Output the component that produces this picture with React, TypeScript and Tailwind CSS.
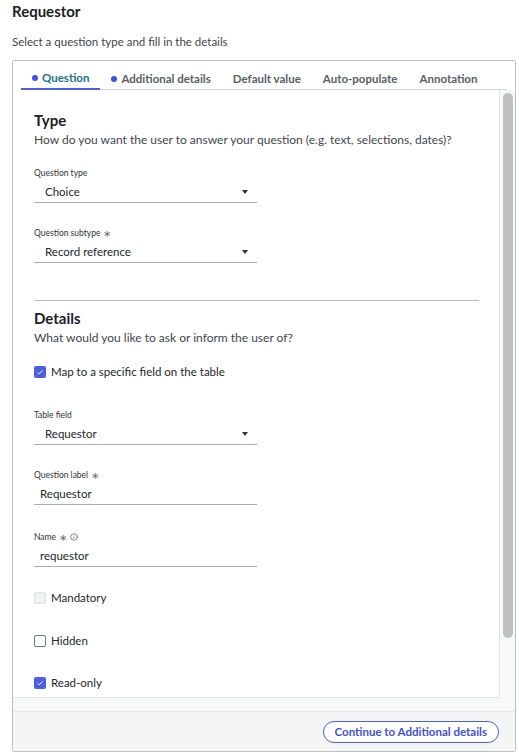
import { Info } from "lucide-react";

const font = { fontFamily: 'Lato, "Noto Sans", Arial, sans-serif' };

const Caret = () => (
  <svg width="6" height="4" viewBox="0 0 6 4" className="text-[#2e3438]">
    <path d="M0 0h6L3 4z" fill="currentColor" />
  </svg>
);

const Req = () => <span className="ml-[3px] text-[10px] text-[#6b7378]">∗</span>;

const Label = ({ children, className = "" }: { children: React.ReactNode; className?: string }) => (
  <div className={`flex h-[12px] items-center text-[8.5px] leading-[12px] text-[#2e3438] ${className}`}>
    {children}
  </div>
);

const SelectRow = ({ value }: { value: string }) => (
  <div className="mt-[2px] flex h-[22px] w-[223px] items-center justify-between border-b border-[#a9aeb1] pl-[11px] pr-[9px] text-[11.5px] text-[#22272b]">
    <span>{value}</span>
    <Caret />
  </div>
);

const InputRow = ({ value }: { value: string }) => (
  <div className="mt-[2px] flex h-[22px] w-[223px] items-center border-b border-[#a9aeb1] pl-[6px] text-[11.5px] text-[#22272b]">
    {value}
  </div>
);

const Check = ({ state }: { state: "on" | "off" | "disabled" }) => {
  if (state === "on")
    return (
      <span className="flex h-[12px] w-[12px] items-center justify-center rounded-[2px] bg-[#4b5ee4]">
        <svg width="8" height="8" viewBox="0 0 8 8">
          <path d="M1.5 4.2l1.7 1.6L6.6 2.4" stroke="white" strokeWidth="1" fill="none" />
        </svg>
      </span>
    );
  if (state === "disabled")
    return <span className="h-[12px] w-[12px] rounded-[2px] border border-[#dfe1e2] bg-[#eff0f0]" />;
  return <span className="h-[12px] w-[12px] rounded-[2px] border border-[#737a7f] bg-white" />;
};

const CheckRow = ({ label, state, className = "" }: { label: string; state: "on" | "off" | "disabled"; className?: string }) => (
  <div className={`flex h-[16px] items-center gap-[5px] text-[11.5px] text-[#22272b] ${className}`}>
    <Check state={state} />
    <span>{label}</span>
  </div>
);

const tabs = [
  { name: "Question", dot: true, active: true },
  { name: "Additional details", dot: true },
  { name: "Default value" },
  { name: "Auto-populate" },
  { name: "Annotation" },
];

export default function App() {
  return (
    <div style={font} className="min-h-[755px] w-[519px] bg-white px-[12px] pt-[1px]">
      <h1 className="text-[15px] font-bold leading-[20px] text-[#1c2124]">Requestor</h1>
      <p className="mt-[13px] text-[11.5px] leading-[16px] text-[#3f464b]">Select a question type and fill in the details</p>

      <div className="mt-[10px] w-[504px] rounded-[2px] border border-[#bcc0c2] bg-[#f7f8f8]">
        {/* tabs */}
        <div className="bg-white px-[8px] pt-[6px]">
          <div className="flex border-b border-[#d2d5d6] pr-[8px]">
            {tabs.map((t) => (
              <div
                key={t.name}
                className={`-mb-px flex h-[23px] items-center gap-[4px] whitespace-nowrap px-[11px] text-[11.5px] font-bold ${
                  t.active ? "border-b-2 border-[#4b5ee4] text-[#1b6f87]" : "text-[#596064]"
                }`}
              >
                {t.dot && <span className="h-[6px] w-[6px] rounded-full bg-[#3f51e2]" />}
                {t.name}
              </div>
            ))}
          </div>
        </div>

        {/* content + scrollbar */}
        <div className="flex">
          <div className="h-[608px] flex-1 overflow-hidden border-r border-b border-[#e1e3e4] bg-white pl-[21px] pt-[20px]">
            <h2 className="text-[15px] font-bold leading-[20px] text-[#1c2124]">Type</h2>
            <p className="mt-[2px] text-[12px] leading-[16px] text-[#3f464b]">
              How do you want the user to answer your question (e.g. text, selections, dates)?
            </p>

            <Label className="mt-[19px]">Question type</Label>
            <SelectRow value="Choice" />

            <Label className="mt-[24px]">
              Question subtype
              <Req />
            </Label>
            <SelectRow value="Record reference" />

            <div className="mt-[37px] mr-[20px] h-px bg-[#b7bbbd]" />

            <h2 className="mt-[7px] text-[15px] font-bold leading-[20px] text-[#1c2124]">Details</h2>
            <p className="mt-[2px] text-[12px] leading-[16px] text-[#3f464b]">What would you like to ask or inform the user of?</p>

            <CheckRow className="mt-[18px]" label="Map to a specific field on the table" state="on" />

            <Label className="mt-[29px]">Table field</Label>
            <SelectRow value="Requestor" />

            <Label className="mt-[24px]">
              Question label
              <Req />
            </Label>
            <InputRow value="Requestor" />

            <Label className="mt-[26px]">
              Name
              <Req />
              <Info className="ml-[3px] h-[8px] w-[8px] text-[#4a5155]" strokeWidth={2} />
            </Label>
            <InputRow value="requestor" />

            <CheckRow className="mt-[23px] text-[#3b4246]" label="Mandatory" state="disabled" />
            <CheckRow className="mt-[27px]" label="Hidden" state="off" />
            <CheckRow className="mt-[26px]" label="Read-only" state="on" />
          </div>
          <div className="w-[15px] pl-[3px] pt-[3px]">
            <div className="h-[545px] w-[10px] rounded-full bg-[#c1c1c1]" />
          </div>
        </div>

        <div className="h-[13px]" />

        {/* footer */}
        <div className="flex h-[40px] items-center justify-end border-t border-[#e3e5e6] bg-[#f4f5f5] pr-[16px]">
          <button className="flex h-[22px] items-center rounded-full border border-[#4b5ee4] bg-white px-[11px] text-[11.5px] font-bold text-[#3f51d8]">
            Continue to Additional details
          </button>
        </div>
      </div>
    </div>
  );
}
